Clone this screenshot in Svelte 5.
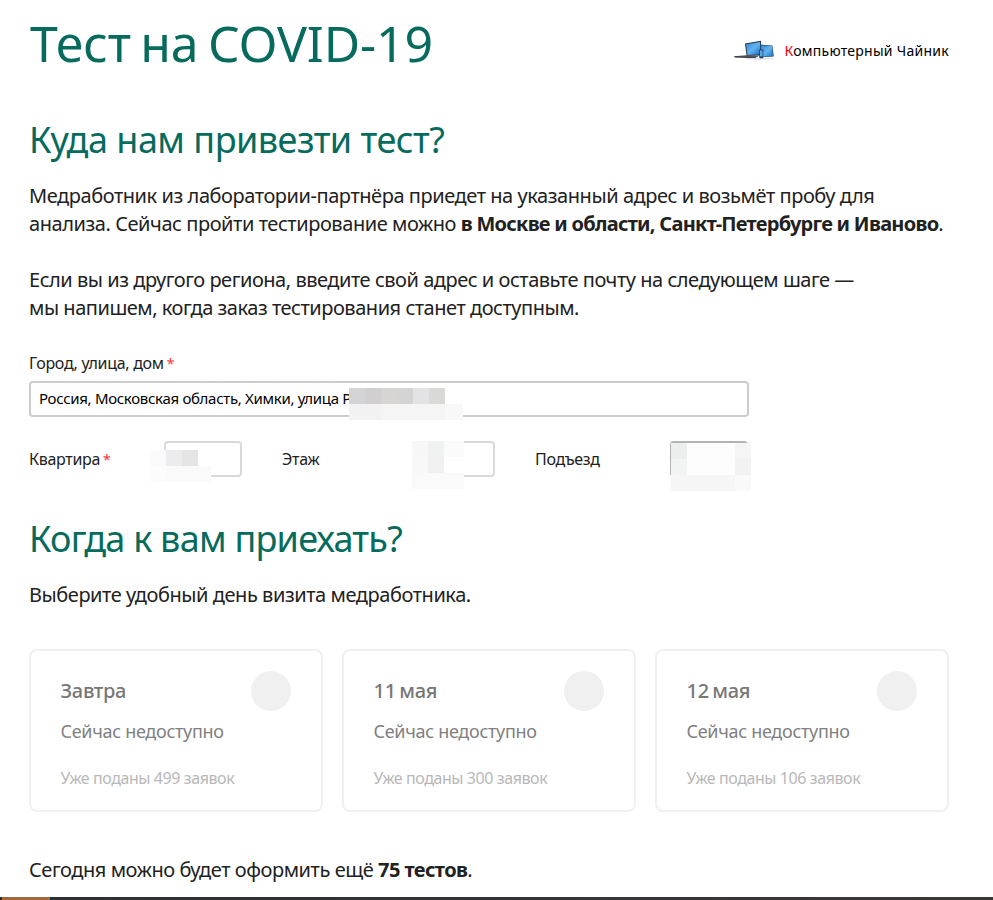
<script lang="ts">
  type Patch = { x: number; y: number; w: number; h: number; color: string };

  const days = [
    { title: 'Завтра', count: 499 },
    { title: '11 мая', count: 300 },
    { title: '12 мая', count: 106 },
  ];

  const streetPatches: Patch[] = [
    { x: 320, y: 7, w: 16, h: 16, color: '#d4d3d6' },
    { x: 336, y: 7, w: 16, h: 16, color: '#d1cfd0' },
    { x: 352, y: 7, w: 16, h: 16, color: '#d6d5d4' },
    { x: 368, y: 7, w: 16, h: 16, color: '#d4d4d4' },
    { x: 384, y: 7, w: 16, h: 16, color: '#e3e3e6' },
    { x: 400, y: 7, w: 16, h: 16, color: '#d9d9d8' },
    { x: 320, y: 23, w: 32, h: 16, color: '#f2f2f3' },
    { x: 352, y: 23, w: 64, h: 16, color: '#f5f5f5' },
    { x: 416, y: 23, w: 18, h: 16, color: '#f8f8f8' },
  ];

  const fields: { label: string; required: boolean; dark?: boolean; patches: Patch[] }[] = [
    {
      label: 'Квартира',
      required: true,
      patches: [
        { x: -14, y: 9, w: 16, h: 16, color: '#fafafa' },
        { x: 2, y: 9, w: 16, h: 16, color: '#ececee' },
        { x: 18, y: 9, w: 16, h: 16, color: '#e5e5e5' },
        { x: -14, y: 25, w: 16, h: 16, color: '#fcfcfc' },
        { x: 2, y: 25, w: 45, h: 16, color: '#fafafa' },
      ],
    },
    {
      label: 'Этаж',
      required: false,
      patches: [
        { x: -5, y: 0, w: 16, h: 16, color: '#f7f7f7' },
        { x: 11, y: 0, w: 16, h: 16, color: '#f0f2f1' },
        { x: 27, y: 0, w: 20, h: 16, color: '#fbfbfb' },
        { x: -5, y: 16, w: 16, h: 16, color: '#f8f8f8' },
        { x: 11, y: 16, w: 16, h: 16, color: '#f0f0f0' },
        { x: 27, y: 16, w: 20, h: 16, color: '#ffffff' },
        { x: -5, y: 32, w: 52, h: 16, color: '#fafafa' },
      ],
    },
    {
      label: 'Подъезд',
      required: false,
      dark: true,
      patches: [
        { x: 1, y: 2, w: 16, h: 16, color: '#eceeed' },
        { x: 17, y: 2, w: 48, h: 32, color: '#fdfdfd' },
        { x: 65, y: 2, w: 16, h: 16, color: '#f5f5f5' },
        { x: 1, y: 18, w: 16, h: 16, color: '#f2f4f3' },
        { x: 65, y: 18, w: 16, h: 16, color: '#f2f2f2' },
        { x: 1, y: 34, w: 64, h: 16, color: '#f6f6f6' },
        { x: 65, y: 34, w: 16, h: 16, color: '#f9f9f9' },
      ],
    },
  ];
</script>

{#snippet mosaic(patches: Patch[])}
  {#each patches as p}
    <i
      class="patch"
      style="left: {p.x}px; top: {p.y}px; width: {p.w}px; height: {p.h}px; background: {p.color}"
    ></i>
  {/each}
{/snippet}

<div class="page">
  <header class="header">
    <h1>Тест на COVID-19</h1>
    <div class="brand">
      <svg width="42" height="22" viewBox="0 0 42 22">
        <defs>
          <linearGradient id="screen" x1="0" y1="0" x2="1" y2="1">
            <stop offset="0" stop-color="#2f86d0" />
            <stop offset="0.5" stop-color="#62b4ef" />
            <stop offset="1" stop-color="#1c6fc0" />
          </linearGradient>
        </defs>
        <path d="M12 20l12 1 17-1-1-1H14z" fill="#dfe4ea" />
        <path d="M27 5.6l12.4.8 1.4 11.2-13.8.8z" fill="#2b4a70" />
        <path d="M28 6.4l10.8.7 1.2 10-12 .6z" fill="url(#screen)" />
        <path d="M12 4.5L28 1.8v14.5L13.6 17z" fill="#22364f" />
        <path d="M13.1 5.2L27.2 2.9v12.4L14.4 16z" fill="url(#screen)" />
        <path d="M1 17.2l12-1 14 .2-4 2.2-21-.5z" fill="#55565b" />
        <path d="M1 17.6l22 .6v.8L2 18.4z" fill="#222327" />
        <rect x="26.3" y="10.4" width="4" height="8.8" rx="0.8" fill="#1d3a5f" />
        <rect x="27" y="11.4" width="2.6" height="6" fill="#58a8e4" />
      </svg>
      <span class="brand-name"><b>К</b>омпьютерный Чайник</span>
    </div>
  </header>

  <h2>Куда нам привезти тест?</h2>
  <p class="text">
    Медработник из лаборатории-партнёра приедет на указанный адрес и возьмёт пробу для<br />
    анализа. Сейчас пройти тестирование можно <strong class="cities">в Москве и области, Санкт-Петербурге и Иваново</strong>.
  </p>
  <p class="text region">
    Если вы из другого региона, введите свой адрес и оставьте почту на следующем шаге —<br />
    мы напишем, когда заказ тестирования станет доступным.
  </p>

  <div class="label address-label">Город, улица, дом <em>*</em></div>
  <div class="input address">
    <span>Россия, Московская область, Химки, улица Р</span>
    {@render mosaic(streetPatches)}
  </div>

  <div class="fields">
    {#each fields as field}
      <div class="field">
        <span class="label">{field.label}{#if field.required}{' '}<em>*</em>{/if}</span>
        <div class="input small" class:dark={field.dark}>
          {@render mosaic(field.patches)}
        </div>
      </div>
    {/each}
  </div>

  <h2 class="when">Когда к вам приехать?</h2>
  <p class="text">Выберите удобный день визита медработника.</p>

  <div class="days">
    {#each days as day}
      <div class="day">
        <div class="day-info">
          <div class="day-title">{day.title}</div>
          <div class="day-status">Сейчас недоступно</div>
          <div class="day-count">Уже поданы {day.count} заявок</div>
        </div>
        <span class="radio"></span>
      </div>
    {/each}
  </div>

  <p class="text total">Сегодня можно будет оформить ещё <strong>75 тестов</strong>.</p>
</div>
<div class="taskbar"></div>

<style>
  :global(body) {
    margin: 0;
    background: #fff;
  }

  .page {
    box-sizing: border-box;
    height: 897px;
    padding: 13px 44px 0 29px;
    font-family: 'Noto Sans', 'Open Sans', sans-serif;
    color: #212121;
    overflow: hidden;
    white-space: nowrap;
  }

  h1,
  h2 {
    margin: 0;
    color: #066b5c;
    font-weight: 400;
  }

  .header {
    display: flex;
    justify-content: space-between;
    height: 60px;
  }

  h1 {
    padding-left: 1px;
    font-size: 50px;
    line-height: 60px;
    letter-spacing: -0.1px;
    word-spacing: -3.5px;
  }

  h2 {
    margin-top: 45px;
    font-size: 36px;
    line-height: 44px;
    letter-spacing: -0.52px;
  }

  .brand {
    display: flex;
    align-items: center;
    gap: 9px;
    height: 22px;
    margin-top: 26px;
  }

  .brand-name {
    padding-top: 1px;
    font-size: 14px;
    line-height: 22px;
    letter-spacing: 0.27px;
    color: #000;
  }

  .brand-name b {
    font-weight: 400;
    color: #f00;
  }

  .text {
    margin: 20px 0 0;
    font-size: 20px;
    line-height: 28px;
    letter-spacing: -0.44px;
  }

  .region {
    margin-top: 28px;
    letter-spacing: -0.47px;
  }

  strong {
    font-weight: 700;
    letter-spacing: -0.57px;
  }

  .cities {
    letter-spacing: -0.72px;
  }

  .label {
    font-size: 16px;
    line-height: 24px;
    letter-spacing: -0.3px;
  }

  .label em {
    margin-left: -1px;
    font-size: 14px;
    font-style: normal;
    line-height: 1;
    color: #f33;
  }

  .address-label {
    margin: 29px 0 6px;
  }

  .input {
    position: relative;
    box-sizing: border-box;
    height: 36px;
    border: 2px solid #ccc;
    border-radius: 4px;
  }

  .address {
    width: 720px;
    padding-left: 8px;
    font-size: 15px;
    line-height: 31px;
    letter-spacing: -0.31px;
    color: #000;
  }

  .small {
    width: 78px;
    border-color: #d9d9d9;
  }

  .dark {
    border-color: #b3b3b3;
  }

  /* offsets are counted from the outer edge of the input border */
  .patch {
    position: absolute;
    margin: -2px 0 0 -2px;
  }

  .fields {
    display: flex;
    gap: 40px;
    margin-top: 24px;
  }

  .field {
    display: flex;
    align-items: center;
    justify-content: space-between;
    width: 213px;
  }

  .when {
    margin-top: 40px;
    letter-spacing: -0.76px;
  }

  .days {
    display: grid;
    grid-template-columns: repeat(3, 294px);
    gap: 19px;
    margin-top: 40px;
  }

  .day {
    display: flex;
    justify-content: space-between;
    box-sizing: border-box;
    height: 163px;
    padding: 20px 30px 0 29.5px;
    border: 2px solid #f0f0f0;
    border-radius: 8px;
  }

  .day-title {
    margin-top: 6px;
    font-size: 20px;
    font-weight: 500;
    line-height: 28px;
    letter-spacing: -0.3px;
    word-spacing: -1.5px;
    color: #777;
  }

  .day-status {
    margin-top: 14px;
    font-size: 18px;
    line-height: 24px;
    letter-spacing: -0.3px;
    color: #808080;
  }

  .day-count {
    margin-top: 24px;
    font-size: 16px;
    line-height: 22px;
    letter-spacing: -0.42px;
    color: #b8b8b8;
  }

  .radio {
    width: 40px;
    height: 40px;
    border-radius: 50%;
    background: #f0f0f0;
  }

  .total {
    margin-top: 44px;
  }

  .taskbar {
    height: 3px;
    background: linear-gradient(90deg, #2d2f33 2px, #a0683c 2px, #a0683c 50px, #2d3035 50px, #3c3838);
  }
</style>
